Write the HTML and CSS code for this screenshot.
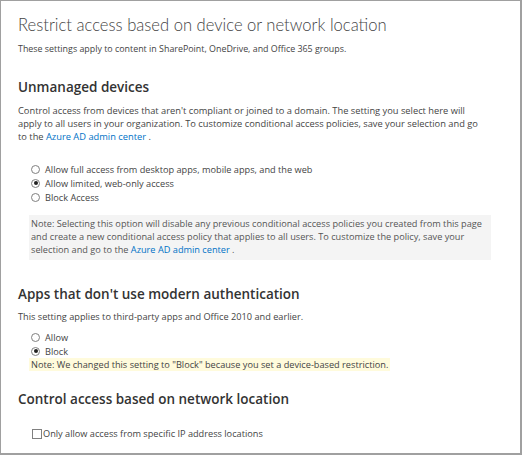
FILE: index.html
```html
<!DOCTYPE html>
<html>
<head>
<meta charset="utf-8">
<link rel="stylesheet" href="styles.css">
</head>
<body>
<div class="frame">
  <h1 class="title">Restrict access based on device or network location</h1>
  <p class="sub">These settings apply to content in SharePoint, OneDrive, and Office 365 groups.</p>

  <h2 class="heading h-unmanaged">Unmanaged devices</h2>
  <p class="para para-main">Control access from devices that aren't compliant or joined to a domain. The setting you select here will apply to all users in your organization. To customize conditional access policies, save your selection and go to the <a class="link">Azure AD admin center</a> .</p>

  <div class="options opts-unmanaged">
    <label class="opt"><span class="radio"></span>Allow full access from desktop apps, mobile apps, and the web</label>
    <label class="opt"><span class="radio on"></span>Allow limited, web-only access</label>
    <label class="opt"><span class="radio"></span>Block Access</label>
  </div>

  <div class="note-gray">Note: Selecting this option will disable any previous conditional access policies you created from this page and create a new conditional access policy that applies to all users. To customize the policy, save your selection and go to the <a class="link">Azure AD admin center</a> .</div>

  <h2 class="heading h-apps">Apps that don't use modern authentication</h2>
  <p class="para para-apps">This setting applies to third-party apps and Office 2010 and earlier.</p>

  <div class="options opts-apps">
    <label class="opt"><span class="radio"></span>Allow</label>
    <label class="opt"><span class="radio on"></span>Block</label>
  </div>
  <div class="note-yellow">Note: We changed this setting to "Block" because you set a device-based restriction.</div>

  <h2 class="heading h-network">Control access based on network location</h2>
  <label class="check-row"><span class="checkbox"></span>Only allow access from specific IP address locations</label>
</div>
</body>
</html>
```

FILE: styles.css
```css
html, body {
  margin: 0;
  padding: 0;
  background: #fff;
}
.frame {
  box-sizing: border-box;
  width: 522px;
  height: 455px;
  border: 1px solid #a0a0a0;
  border-right-width: 2px;
  border-bottom-width: 2px;
  padding: 0 0 0 17px;
  font-family: "Open Sans", sans-serif;
  font-size: 9.2px;
  color: #444;
  overflow: hidden;
}
.title {
  margin: 11px 0 0;
  font-family: Lato, "Open Sans", sans-serif;
  font-size: 16.6px;
  font-weight: 300;
  line-height: 26px;
  color: #444;
}
.sub {
  margin: 4px 0 0;
  font-size: 8.9px;
  line-height: 13px;
}
.heading {
  margin: 0;
  font-size: 13.5px;
  font-weight: 600;
  line-height: 18px;
  color: #333;
}
.h-unmanaged { margin-top: 23px; }
.para {
  margin: 8px 0 0;
  line-height: 13px;
}
.para-main {
  font-size: 9.3px;
  max-width: 466px;
}
.para-apps { margin-top: 7px; }
.link {
  color: #0072c6;
  text-decoration: none;
}
.options {
  display: flex;
  flex-direction: column;
  padding-left: 13px;
}
.opts-unmanaged { margin-top: 19px; }
.opt {
  display: flex;
  align-items: center;
  height: 14px;
  gap: 5px;
}
.radio {
  box-sizing: border-box;
  width: 9px;
  height: 9px;
  border: 1px solid #808080;
  border-radius: 50%;
  background: #fff;
  display: flex;
  align-items: center;
  justify-content: center;
}
.radio.on::after {
  content: "";
  width: 4px;
  height: 4px;
  border-radius: 50%;
  background: #222;
}
.note-gray {
  margin: 11px 29px 0 11px;
  padding: 2px 2px 4px 2px;
  background: #f4f4f4;
  line-height: 13px;
  color: #555;
}
.h-apps { margin-top: 25px; }
.opts-apps { margin-top: 7px; }
.note-yellow {
  display: inline-block;
  margin-left: 11px;
  padding: 0 2px;
  background: #fffbdc;
  line-height: 13px;
}
.h-network { margin-top: 19px; }
.check-row {
  display: flex;
  align-items: center;
  gap: 1px;
  margin: 19px 0 0 14px;
}
.checkbox {
  box-sizing: border-box;
  width: 10px;
  height: 10px;
  border: 1px solid #808080;
  background: #fff;
}
```
